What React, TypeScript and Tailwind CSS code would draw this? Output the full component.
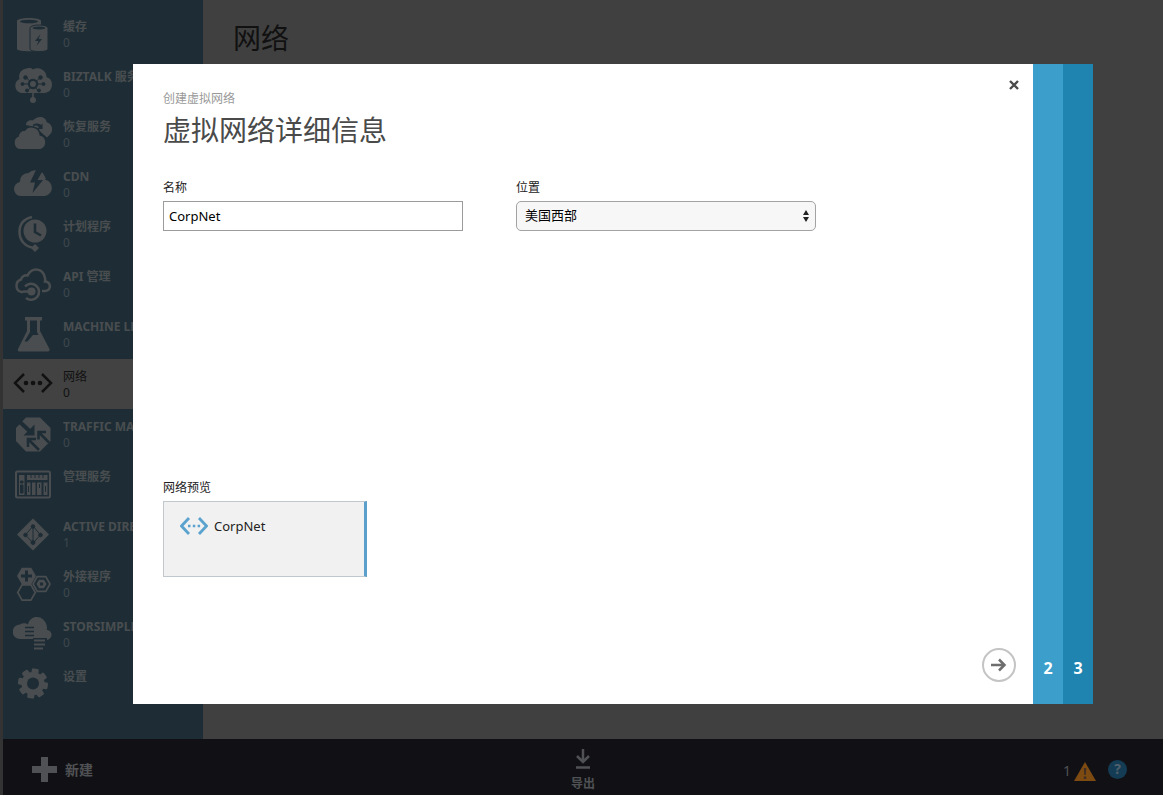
import React, { useState } from "react";

const HOLE = "#1e2d35";

function Glyph({ children }: { children: React.ReactNode }) {
  return (
    <svg viewBox="0 0 40 40" className="size-10 shrink-0" fill="currentColor" aria-hidden="true">
      {children}
    </svg>
  );
}

const hex = (cx: number, cy: number, r: number) =>
  [0, 60, 120, 180, 240, 300]
    .map((a) => {
      const t = (a * Math.PI) / 180;
      return `${(cx + r * Math.cos(t)).toFixed(1)},${(cy + r * Math.sin(t)).toFixed(1)}`;
    })
    .join(" ");

const CacheIcon = () => (
  <Glyph>
    <path d="M4 7c0-4 24-4 24 0v28c0 3-24 3-24 0z" />
    <ellipse cx="16" cy="7.5" rx="9" ry="1.7" fill={HOLE} />
    <path d="M17 14c0-4 18-4 18 0v21c0 3.500-18 3.500-18 0z" stroke={HOLE} strokeWidth="1" />
    <ellipse cx="26" cy="14" rx="6.5" ry="1.400" fill={HOLE} />
    <path d="m27.500 20-5.500 7h3.500l-2 5 5.500-7h-3.500z" fill={HOLE} />
  </Glyph>
);

const BizTalkIcon = () => (
  <Glyph>
    <path d="M8 29a7.500 7.500 0 0 1-1.500-14A8 8 0 0 1 14 4.500c3-1 5 0 6 1a9 9 0 0 1 13.500 7.500 8.300 8.300 0 0 1-1.500 16z" />
    <g stroke={HOLE} strokeWidth="1" fill={HOLE}>
      <path d="M20 20 12.500 13M20 20l8-7M20 20H9M20 20h11M20 20l-6 8M20 20l6 8" />
      <circle cx="12.500" cy="13.500" r="1.800" />
      <circle cx="27.500" cy="13.500" r="1.800" />
      <circle cx="9.500" cy="20" r="1.500" />
      <circle cx="30.500" cy="20" r="1.500" />
      <circle cx="14" cy="26.500" r="1.500" />
      <circle cx="26" cy="26.500" r="1.500" />
      <circle cx="20" cy="20" r="4.800" />
    </g>
    <circle cx="20" cy="20" r="3" />
    <path d="M19.200 27h1.600v8h-1.600z" />
    <circle cx="20" cy="36" r="3" />
  </Glyph>
);

const RecoveryIcon = () => (
  <Glyph>
    <path d="M13 11c0-4 4-5.500 7-4.500 4-5 12-5 14 2 5 1 7 8 3 12l-3 3-8-7-6-4z" />
    <path d="M20 10.500c3-1.500 6-1 8 .5l1.500-1.500V15H24l2-2c-1.500-1.500-3.500-2-6-1z" fill={HOLE} />
    <path d="M7 35a6.500 6.500 0 0 1-1-12.500c0-4 3.500-6 6-5.500a8 8 0 0 1 14.500 4.500A7 7 0 0 1 27.500 35z" stroke={HOLE} strokeWidth="3" paintOrder="stroke" />
  </Glyph>
);

const CdnIcon = () => (
  <Glyph>
    <path d="M8 32a7 7 0 0 1-1.200-13.900A8.500 8.500 0 0 1 15.500 9a10 10 0 0 1 16.800 6.800A8.200 8.200 0 0 1 31.500 32z" />
    <path d="m23 6-6 12.500h5L19.500 29 30 16h-5.500L30 6z" fill={HOLE} />
    <path d="m29 8 4 7h-5z" />
  </Glyph>
);

const SchedulerIcon = () => (
  <Glyph>
    <circle cx="22" cy="17" r="11.500" />
    <path d="M22 9.500V18l6 3.500" fill="none" stroke={HOLE} strokeWidth="2.500" />
    <path d="M19 3C10 5 6.500 11 6.500 18c0 8 5 14 13 15.500" fill="none" stroke="currentColor" strokeWidth="2.500" />
    <path d="m22 30 4 4-4 4-4-4z" />
  </Glyph>
);

const ApiIcon = () => (
  <Glyph>
    <g fill="none" stroke="currentColor" strokeWidth="2.500">
      <path d="M10 28H8.500A6.500 6.500 0 0 1 8 15.500c1-4 4.500-4.500 6.500-4C19 3 30 3.500 32 14c.3 1.200.2 2.500 0 3.500 6 .5 7 8.500 0 9.500h-3" />
      <path d="M12 22.500a8 8 0 1 1 1 11.500" />
    </g>
    <circle cx="18.500" cy="27.500" r="4" />
    <path d="M10 26.300h9v2.500h-9z" />
  </Glyph>
);

const FlaskIcon = () => (
  <Glyph>
    <path d="M12 3h17v3.500h-2V17l9.500 18c.5 1.500-.5 2.500-1.500 2.500H6.500C5 37.500 4.500 36 5 35l9-18V6.500h-2z" />
    <path d="M17 6.500h7V18l1.500 3H20l-5.500 6.500h-3L17 18z" fill={HOLE} />
  </Glyph>
);

const NetworkIcon = () => (
  <Glyph>
    <path d="m11 10-9 9 9 9M29 10l9 9-9 9" fill="none" stroke="currentColor" strokeWidth="2.500" />
    <circle cx="13" cy="19" r="2.300" />
    <circle cx="20" cy="19" r="2.300" />
    <circle cx="27" cy="19" r="2.300" />
  </Glyph>
);

const TrafficIcon = () => (
  <Glyph>
    <path d="M13 3.500h14L37.500 14v13L27 37.500H13L3 27V14z" />
    <path d="m7 8 10 9.500" stroke={HOLE} strokeWidth="4" />
    <path d="M21.500 10.500v11h-11z" fill={HOLE} />
    <g fill="none" stroke={HOLE} strokeWidth="2.500">
      <path d="M36 28.500 26 18.500M25.500 25.500v-7.500h7.500" />
      <path d="M26 36 15.500 25.500M15 33v-8h8" />
    </g>
  </Glyph>
);

const ManagementIcon = () => (
  <Glyph>
    <rect x="3" y="7.500" width="34" height="26" rx="1.500" fill="none" stroke="currentColor" strokeWidth="2" />
    <path d="M6 11h5.500v20H6zM14 11h20.500v5H14zM14 18.500h3.500V31H14zM19 18.500h3.500V31H19zM24 18.500h4.500V31H24zM30.500 18.500h4V31h-4z" />
    <path d="M7.500 17H10v2H7.500zM7.500 21H10v8H7.500zM18 11v3M22 11v3M26 11v3M30 11v3M15.500 22v6M26.500 20v4M32.500 22v6" fill={HOLE} stroke={HOLE} strokeWidth="1" />
  </Glyph>
);

const DirectoryIcon = () => (
  <Glyph>
    <path d="M20 4.500 36 20.500l-16 16-16-16z" />
    <g stroke={HOLE} strokeWidth="1" fill={HOLE}>
      <path d="M20 12v17M20 12l-7.500 9M20 12l7.500 9M12.500 21 20 29M27.500 21 20 29" fill="none" />
      <circle cx="20" cy="12.500" r="1.800" />
      <circle cx="12.500" cy="21" r="1.800" />
      <circle cx="27.500" cy="21" r="1.800" />
      <circle cx="20" cy="28.500" r="2" />
    </g>
  </Glyph>
);

const AddonIcon = () => (
  <Glyph>
    <polygon points={hex(13.5, 12, 9.5)} />
    <path d="M12 6.500h3v4h4v3h-4v4h-3v-4H8v-3h4z" fill={HOLE} />
    <polygon points={hex(28.5, 20, 8.5)} fill="none" stroke="currentColor" strokeWidth="1.700" />
    <polygon points={hex(28.5, 20, 5)} />
    <circle cx="28.500" cy="20" r="1.800" fill={HOLE} />
    <polygon points={hex(13.5, 28.5, 8.8)} fill="none" stroke="currentColor" strokeWidth="1.700" />
  </Glyph>
);

const StorIcon = () => (
  <Glyph>
    <path d="M7 25a6.500 6.500 0 0 1 0-14.500c3-2 6-1 8 0C17 0 32 0 34 13c0 1.500 0 2.500-.5 3 6 0 7 8 1 10H20v-1z" />
    <path d="M12 13.500h9M12 17.500h9M12 21.500h9" stroke={HOLE} strokeWidth="1.500" />
    <path d="M20 24h14v4H20z" fill={HOLE} />
    <path d="M21 25.500h11v2H21zM21 29.500h11v2H21zM21 33.500h9v2h-9z" />
  </Glyph>
);

const SettingsIcon = () => (
  <Glyph>
    {[0, 45, 90, 135].map((a) => (
      <rect key={a} x="16.500" y="4.500" width="7" height="30" rx="1.500" transform={`rotate(${a + 10} 20 19.5)`} />
    ))}
    <circle cx="20" cy="19.500" r="11.500" />
    <circle cx="20" cy="19.500" r="6" fill={HOLE} />
  </Glyph>
);

const services = [
  { name: "缓存", count: "0", Icon: CacheIcon },
  { name: "BIZTALK 服务", count: "0", Icon: BizTalkIcon },
  { name: "恢复服务", count: "0", Icon: RecoveryIcon },
  { name: "CDN", count: "0", Icon: CdnIcon },
  { name: "计划程序", count: "0", Icon: SchedulerIcon },
  { name: "API 管理", count: "0", Icon: ApiIcon },
  { name: "MACHINE LEARNING", count: "0", Icon: FlaskIcon },
  { name: "网络", count: "0", Icon: NetworkIcon, active: true },
  { name: "TRAFFIC MANAGER", count: "0", Icon: TrafficIcon },
  { name: "管理服务", count: "", Icon: ManagementIcon },
  { name: "ACTIVE DIRECTORY", count: "1", Icon: DirectoryIcon },
  { name: "外接程序", count: "0", Icon: AddonIcon },
  { name: "STORSIMPLE", count: "0", Icon: StorIcon },
  { name: "设置", count: "", Icon: SettingsIcon },
];

function Sidebar() {
  return (
    <nav className="w-[200px] shrink-0 bg-[#1e2d35] pt-[9px] pb-[30px] text-[#494d50]">
      <ul>
        {services.map(({ name, count, Icon, active }) => (
          <li key={name}>
            <a
              href="#"
              aria-current={active ? "page" : undefined}
              className={
                active
                  ? "flex h-[50px] items-center gap-[10px] bg-[#424242] pl-[10px] text-[#111111]"
                  : "flex h-[50px] items-center gap-[10px] pl-[10px]"
              }
            >
              <Icon />
              <span className="min-w-0 pt-[2px] text-xs leading-4">
                <span className={active ? "block truncate" : "block truncate font-bold"}>{name}</span>
                <span className={active ? "block h-4" : "block h-4 text-[#3d474d]"}>{count}</span>
              </span>
            </a>
          </li>
        ))}
      </ul>
    </nav>
  );
}

function CommandBar() {
  return (
    <footer className="grid h-14 grid-cols-3 bg-[#111115] text-[#505154]">
      <button className="flex items-center gap-2 justify-self-start pt-[5px] pl-[29px] text-sm font-bold">
        <svg viewBox="0 0 25 25" className="size-[25px]" fill="currentColor" aria-hidden="true">
          <path d="M9 0h7v9h9v7h-9v9H9v-9H0V9h9z" />
        </svg>
        新建
      </button>
      <button className="flex flex-col items-center gap-[6px] justify-self-center pt-[9px] text-xs font-bold leading-4">
        <svg viewBox="0 0 16 22" className="h-[22px] w-4" fill="none" stroke="currentColor" strokeWidth="2.500" aria-hidden="true">
          <path d="M8 1v13M2 8l6 6 6-6M1 19.500h14" />
        </svg>
        导出
      </button>
      <div className="flex items-center gap-3 justify-self-end pt-1 pr-9 text-sm">
        <button className="flex items-center gap-[3px] pt-1">
          <span>1</span>
          <svg viewBox="0 0 22 19" className="h-[19px] w-[22px]" aria-hidden="true">
            <path d="M11 0 22 19H0z" fill="#7d4a12" />
            <path d="M9.800 6h2.500l-.5 7h-1.500zM9.800 14.500h2.500V17H9.800z" fill="#3f2f22" />
          </svg>
        </button>
        <button aria-label="帮助" className="flex size-[19px] items-center justify-center rounded-full bg-[#143c54] font-bold leading-4 text-[#4f606b]">
          ?
        </button>
      </div>
    </footer>
  );
}

function CreateNetworkDialog() {
  const [name, setName] = useState("CorpNet");
  return (
    <div className="absolute inset-0 flex pt-16 pr-[70px] pb-[91px] pl-[130px]">
      <section role="dialog" aria-labelledby="dialog-title" className="flex flex-1">
        <div className="relative flex flex-1 flex-col bg-white pt-[26px] pr-[17px] pb-[22px] pl-[30px] text-[#222222]">
          <button aria-label="关闭" className="absolute top-[14px] right-3 flex size-[14px] items-center justify-center text-[#4a4a4a]">
            <svg viewBox="0 0 10 10" className="size-[10px]" fill="none" stroke="currentColor" strokeWidth="2.400" aria-hidden="true">
              <path d="m1 1 8 8M9 1 1 9" />
            </svg>
          </button>
          <p className="text-xs leading-[18px] text-[#999999]">创建虚拟网络</p>
          <h2 id="dialog-title" className="mt-[2px] text-[28px] leading-10 text-[#4a4a4a]">虚拟网络详细信息</h2>
          <form className="mt-[29px] flex gap-[53px]">
            <div className="flex w-[300px] flex-col gap-1">
              <label htmlFor="network-name" className="text-xs leading-[18px]">名称</label>
              <input
                id="network-name"
                value={name}
                onChange={(e) => setName(e.target.value)}
                className="h-[30px] border border-[#9b9b9b] bg-white px-[5px] text-[13px] text-black outline-none"
              />
            </div>
            <div className="flex w-[300px] flex-col gap-1">
              <label htmlFor="network-location" className="text-xs leading-[18px]">位置</label>
              <div className="relative">
                <select
                  id="network-location"
                  className="block h-[30px] w-full appearance-none rounded-[5px] border border-[#a3a3a3] bg-[#f7f7f7] px-2 text-[13px] text-black outline-none"
                >
                  <option>美国西部</option>
                </select>
                <svg viewBox="0 0 6 12" className="pointer-events-none absolute top-[9px] right-[7px] h-3 w-[6px]" fill="#222222" aria-hidden="true">
                  <path d="m3 0 3 5H0zM3 12 0 7h6z" />
                </svg>
              </div>
            </div>
          </form>
          <h3 className="mt-auto text-xs leading-[18px]">网络预览</h3>
          <div className="mt-1 flex h-[76px] w-[204px] items-start gap-[6px] border border-r-[3px] border-[#c0c8ce] border-r-[#5ba0cc] bg-[#f1f1f1] px-4 pt-[14px]">
            <svg viewBox="0 0 28 20" className="h-5 w-7" fill="none" stroke="#5ba3cf" strokeWidth="2.800" aria-hidden="true">
              <path d="m9 2-7.500 8L9 18M19 2l7.500 8-7.500 8" />
              <path d="M8 10h2.500M12.800 10h2.500M17.600 10h2.500" strokeWidth="2.500" />
            </svg>
            <span className="text-[13px] leading-5">{name}</span>
          </div>
          <button aria-label="下一步" className="mt-[71px] flex size-[34px] items-center justify-center self-end rounded-full border-2 border-[#c4c4c4] text-[#6e6e6e]">
            <svg viewBox="0 0 16 14" className="h-[14px] w-4" fill="none" stroke="currentColor" strokeWidth="2.500" aria-hidden="true">
              <path d="M0 7h13M8 1.500 13.500 7 8 12.500" />
            </svg>
          </button>
        </div>
        <button className="flex w-[30px] items-end justify-center bg-[#3c9fcb] pb-6 font-bold leading-6 text-white">2</button>
        <button className="flex w-[30px] items-end justify-center bg-[#1f84b0] pb-6 font-bold leading-6 text-white">3</button>
      </section>
    </div>
  );
}

export default function App() {
  return (
    <div className="relative flex min-h-screen flex-col border-l-[3px] border-[#333333] bg-[#404040] font-['Noto_Sans','Noto_Sans_CJK_SC',sans-serif]">
      <div className="flex flex-1">
        <Sidebar />
        <main className="flex-1 px-[30px] pt-[18px]">
          <h1 className="text-[28px] leading-10 text-[#111111]">网络</h1>
        </main>
      </div>
      <CommandBar />
      <CreateNetworkDialog />
    </div>
  );
}
